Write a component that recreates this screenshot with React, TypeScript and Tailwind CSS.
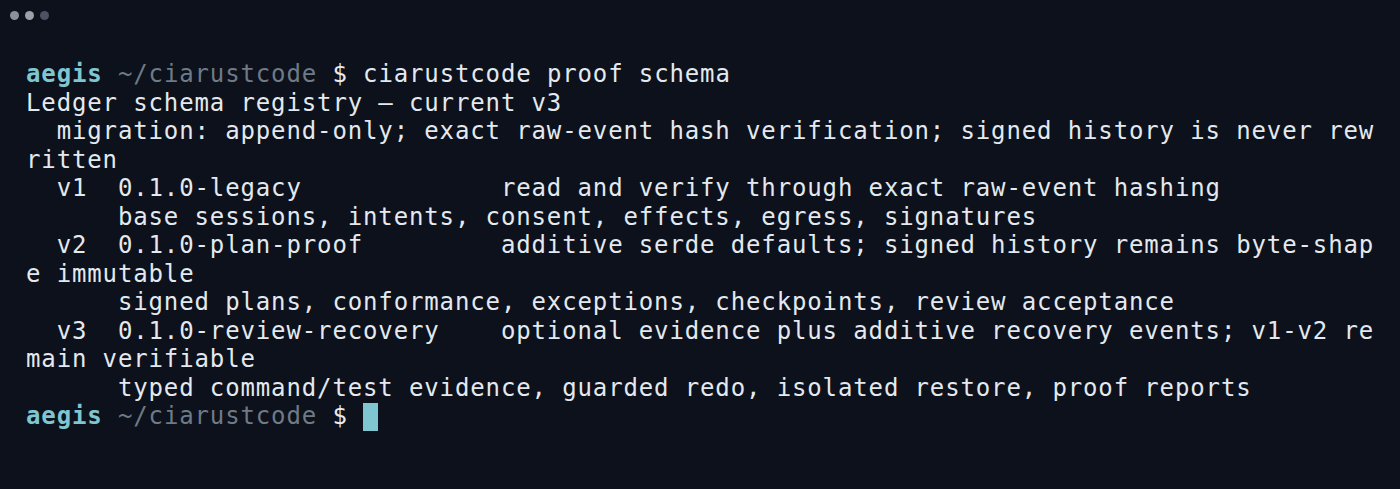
import React from 'react';

const lines: string[] = [
  'Ledger schema registry — current v3',
  '  migration: append-only; exact raw-event hash verification; signed history is never rew',
  'ritten',
  '  v1  0.1.0-legacy             read and verify through exact raw-event hashing',
  '      base sessions, intents, consent, effects, egress, signatures',
  '  v2  0.1.0-plan-proof         additive serde defaults; signed history remains byte-shap',
  'e immutable',
  '      signed plans, conformance, exceptions, checkpoints, review acceptance',
  '  v3  0.1.0-review-recovery    optional evidence plus additive recovery events; v1-v2 re',
  'main verifiable',
  '      typed command/test evidence, guarded redo, isolated restore, proof reports',
];

const Prompt: React.FC<{ children?: React.ReactNode }> = ({ children }) => (
  <div className="h-[28.5px] whitespace-pre">
    <span className="font-bold text-[#7fc6d0]">aegis</span>
    <span className="text-[#6f7a87]"> ~/ciarustcode</span>
    <span className="text-[#e6ebf1]"> $ </span>
    {children}
  </div>
);

const App: React.FC = () => {
  return (
    <div className="h-[489px] w-[1400px] overflow-hidden bg-[#0c111b]">
      {/* window dots */}
      <div className="flex h-[30px] items-center gap-[6px] pl-[10px]">
        <span className="h-[9px] w-[9px] rounded-full bg-[#8b909a]" />
        <span className="h-[9px] w-[9px] rounded-full bg-[#9ba0a9]" />
        <span className="h-[9px] w-[9px] rounded-full bg-[#4b5261]" />
      </div>

      <div className="pl-[26px] pt-[30px] font-['DejaVu_Sans_Mono','Liberation_Mono',monospace] text-[24px] leading-[28.5px] tracking-[0.87px] text-[#e3e9ef]">
        <Prompt>
          <span>ciarustcode proof schema</span>
        </Prompt>
        {lines.map((l, i) => (
          <div key={i} className="h-[28.5px] whitespace-pre">
            {l}
          </div>
        ))}
        <Prompt>
          <span className="inline-block h-[28px] w-[15px] align-top mt-[1px] bg-[#7fc6d0]" />
        </Prompt>
      </div>
    </div>
  );
};

export default App;
